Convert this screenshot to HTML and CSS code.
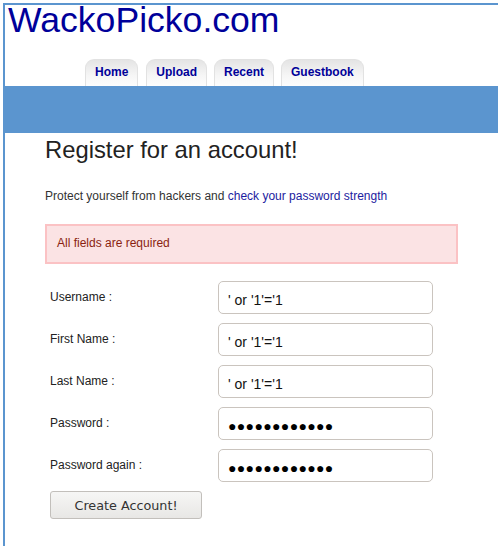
FILE: index.html
```html
<!DOCTYPE html>
<html>
<head>
<meta charset="utf-8">
<title>WackoPicko.com</title>
<link rel="stylesheet" href="styles.css">
</head>
<body>
<div class="page">
  <div class="header">
    <h1 class="logo">WackoPicko.com</h1>
    <ul class="tabs">
      <li class="tab"><a href="#">Home</a></li>
      <li class="tab"><a href="#">Upload</a></li>
      <li class="tab"><a href="#">Recent</a></li>
      <li class="tab"><a href="#">Guestbook</a></li>
    </ul>
  </div>
  <div class="bar"></div>
  <div class="content">
    <h2 class="title">Register for an account!</h2>
    <p class="intro">Protect yourself from hackers and <a href="#" class="link">check your password strength</a></p>
    <div class="error">All fields are required</div>
    <form class="form">
      <div class="row"><label class="label">Username :</label><input class="field" type="text" value="' or '1'='1"></div>
      <div class="row"><label class="label">First Name :</label><input class="field" type="text" value="' or '1'='1"></div>
      <div class="row"><label class="label">Last Name :</label><input class="field" type="text" value="' or '1'='1"></div>
      <div class="row"><label class="label">Password :</label><input class="field masked" type="text" readonly value="●●●●●●●●●●●●"></div>
      <div class="row"><label class="label">Password again :</label><input class="field masked" type="text" readonly value="●●●●●●●●●●●●"></div>
      <div class="actions"><button class="button" type="button">Create Account!</button></div>
    </form>
  </div>
</div>
</body>
</html>
```
FILE: styles.css
```css
html, body {
  margin: 0;
  padding: 0;
  background: #fff;
  overflow: hidden;
}
body {
  font-family: "Liberation Sans", Arial, sans-serif;
}
.page {
  margin: 3px 0 0 3px;
  border-left: 2px solid #5b95cf;
  border-top: 2px solid #5b95cf;
  box-sizing: border-box;
  height: calc(100vh - 3px);
}
.header {
  padding-left: 3px;
}
.logo {
  margin: 0;
  font-size: 35.6px;
  line-height: 30px;
  font-weight: normal;
  color: #00009a;
}
.tabs {
  list-style: none;
  margin: 24px 0 0 77px;
  padding: 0;
  display: flex;
  gap: 7px;
}
.tab {
  height: 27px;
  box-sizing: border-box;
  border: 1px solid #e2e2e2;
  border-bottom: none;
  border-radius: 9px 9px 0 0;
  background: linear-gradient(#e4e4e4, #f6f6f6 60%, #fdfdfd);
  padding: 0 9px;
  display: flex;
  align-items: flex-start;
}
.tab:first-child { margin-right: 1px; }
.tab a {
  font-weight: bold;
  font-size: 12px;
  line-height: 14px;
  margin-top: 5px;
  color: #000099;
  text-decoration: none;
}
.bar {
  height: 47px;
  background: #5b95cf;
}
.content {
  padding-left: 40px;
  width: 413px;
}
.title {
  margin: 3px 0 0;
  font-size: 23.8px;
  line-height: 28px;
  font-weight: normal;
  color: #222;
}
.intro {
  margin: 25px 0 0;
  font-size: 12px;
  line-height: 14px;
  color: #333;
}
.link {
  color: #1c1ca0;
  text-decoration: none;
}
.error {
  margin-top: 21px;
  background: #fbe3e4;
  border: 2px solid #fbc2c4;
  color: #8a1f11;
  font-size: 12px;
  line-height: 16px;
  padding: 9px 10px 11px;
}
.form {
  margin: 17px 0 0 5px;
  display: flex;
  flex-direction: column;
  gap: 9px;
}
.row {
  display: flex;
  align-items: flex-start;
}
.label {
  width: 168px;
  padding-top: 9px;
  font-size: 12px;
  line-height: 14px;
  color: #222;
}
.field {
  width: 215px;
  height: 33px;
  box-sizing: border-box;
  margin: 0;
  border: 1px solid #cac4be;
  border-radius: 5px;
  padding: 4px 9px 0;
  font-family: "Liberation Sans", Arial, sans-serif;
  font-size: 14px;
  color: #111;
  background: #fff;
  outline: none;
}
.masked {
  color: #000;
  letter-spacing: 0.35px;
}
.actions {
  display: flex;
}
.button {
  width: 152px;
  height: 28px;
  margin: 0;
  border: 1px solid #c2bfbb;
  border-radius: 3px;
  background: linear-gradient(#f6f6f5, #e8e7e5);
  font-family: "DejaVu Sans", sans-serif;
  font-size: 12.75px;
  color: #333;
  padding: 0;
}
```
